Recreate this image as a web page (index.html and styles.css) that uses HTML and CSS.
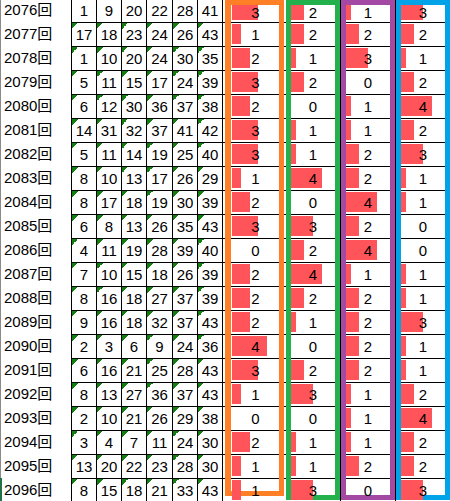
FILE: index.html
```html
<!DOCTYPE html>
<html lang="ja">

<head>
  <meta charset="UTF-8" />
  <title>ロト6 出現数</title>
  <link rel="stylesheet" href="styles.css">
</head>

<body>
  <div class="sheet">
    <!-- 回号 -->
    <div class="draws">
      <div class="draw">2076回</div>
      <div class="draw">2077回</div>
      <div class="draw">2078回</div>
      <div class="draw">2079回</div>
      <div class="draw">2080回</div>
      <div class="draw">2081回</div>
      <div class="draw">2082回</div>
      <div class="draw">2083回</div>
      <div class="draw">2084回</div>
      <div class="draw">2085回</div>
      <div class="draw">2086回</div>
      <div class="draw">2087回</div>
      <div class="draw">2088回</div>
      <div class="draw">2089回</div>
      <div class="draw">2090回</div>
      <div class="draw">2091回</div>
      <div class="draw">2092回</div>
      <div class="draw">2093回</div>
      <div class="draw">2094回</div>
      <div class="draw">2095回</div>
      <div class="draw draw-sel">2096回</div>
    </div>

    <!-- 当選番号 -->
    <div class="nums">
      <div class="num first">1</div><div class="num first">9</div><div class="num first">20</div><div class="num first">22</div><div class="num first">28</div><div class="num first">41</div>
      <div class="num">17</div><div class="num">18</div><div class="num">23</div><div class="num">24</div><div class="num">26</div><div class="num">43</div>
      <div class="num">1</div><div class="num">10</div><div class="num">20</div><div class="num">24</div><div class="num">30</div><div class="num">35</div>
      <div class="num">5</div><div class="num">11</div><div class="num">15</div><div class="num">17</div><div class="num">24</div><div class="num">39</div>
      <div class="num">6</div><div class="num">12</div><div class="num">30</div><div class="num">36</div><div class="num">37</div><div class="num">38</div>
      <div class="num">14</div><div class="num">31</div><div class="num">32</div><div class="num">37</div><div class="num">41</div><div class="num">42</div>
      <div class="num">5</div><div class="num">11</div><div class="num">14</div><div class="num">19</div><div class="num">25</div><div class="num">40</div>
      <div class="num">8</div><div class="num">10</div><div class="num">13</div><div class="num">17</div><div class="num">26</div><div class="num">29</div>
      <div class="num">8</div><div class="num">17</div><div class="num">18</div><div class="num">19</div><div class="num">30</div><div class="num">39</div>
      <div class="num">6</div><div class="num">8</div><div class="num">13</div><div class="num">26</div><div class="num">35</div><div class="num">43</div>
      <div class="num">4</div><div class="num">11</div><div class="num">19</div><div class="num">28</div><div class="num">39</div><div class="num">40</div>
      <div class="num">7</div><div class="num">10</div><div class="num">15</div><div class="num">18</div><div class="num">26</div><div class="num">39</div>
      <div class="num">8</div><div class="num">16</div><div class="num">18</div><div class="num">27</div><div class="num">37</div><div class="num">39</div>
      <div class="num">9</div><div class="num">16</div><div class="num">18</div><div class="num">32</div><div class="num">37</div><div class="num">43</div>
      <div class="num">2</div><div class="num">3</div><div class="num">6</div><div class="num">9</div><div class="num">24</div><div class="num">36</div>
      <div class="num">6</div><div class="num">16</div><div class="num">21</div><div class="num">25</div><div class="num">28</div><div class="num">43</div>
      <div class="num">8</div><div class="num">13</div><div class="num">27</div><div class="num">36</div><div class="num">37</div><div class="num">43</div>
      <div class="num">2</div><div class="num">10</div><div class="num">21</div><div class="num">26</div><div class="num">29</div><div class="num">38</div>
      <div class="num">3</div><div class="num">4</div><div class="num">7</div><div class="num">11</div><div class="num">24</div><div class="num">30</div>
      <div class="num">13</div><div class="num">20</div><div class="num">22</div><div class="num">23</div><div class="num">28</div><div class="num">30</div>
      <div class="num">8</div><div class="num">15</div><div class="num">18</div><div class="num">21</div><div class="num">33</div><div class="num">43</div>
    </div>

    <div class="ticks"></div>

    <!-- グループ1 -->
    <div class="box box-orange">
      <div class="cell"><span class="bar" style="width:26px"></span><span class="val">3</span></div>
      <div class="cell"><span class="bar" style="width:9px"></span><span class="val">1</span></div>
      <div class="cell"><span class="bar" style="width:18px"></span><span class="val">2</span></div>
      <div class="cell"><span class="bar" style="width:26px"></span><span class="val">3</span></div>
      <div class="cell"><span class="bar" style="width:18px"></span><span class="val">2</span></div>
      <div class="cell"><span class="bar" style="width:26px"></span><span class="val">3</span></div>
      <div class="cell"><span class="bar" style="width:26px"></span><span class="val">3</span></div>
      <div class="cell"><span class="bar" style="width:9px"></span><span class="val">1</span></div>
      <div class="cell"><span class="bar" style="width:18px"></span><span class="val">2</span></div>
      <div class="cell"><span class="bar" style="width:26px"></span><span class="val">3</span></div>
      <div class="cell"><span class="bar" style="width:0"></span><span class="val">0</span></div>
      <div class="cell"><span class="bar" style="width:18px"></span><span class="val">2</span></div>
      <div class="cell"><span class="bar" style="width:18px"></span><span class="val">2</span></div>
      <div class="cell"><span class="bar" style="width:18px"></span><span class="val">2</span></div>
      <div class="cell"><span class="bar" style="width:35px"></span><span class="val">4</span></div>
      <div class="cell"><span class="bar" style="width:26px"></span><span class="val">3</span></div>
      <div class="cell"><span class="bar" style="width:9px"></span><span class="val">1</span></div>
      <div class="cell"><span class="bar" style="width:0"></span><span class="val">0</span></div>
      <div class="cell"><span class="bar" style="width:18px"></span><span class="val">2</span></div>
      <div class="cell"><span class="bar" style="width:9px"></span><span class="val">1</span></div>
      <div class="cell"><span class="bar" style="width:9px"></span><span class="val">1</span></div>
    </div>

    <div class="sep"></div>

    <!-- グループ2 -->
    <div class="box box-green">
      <div class="cell"><span class="bar" style="width:13px"></span><span class="val">2</span></div>
      <div class="cell"><span class="bar" style="width:13px"></span><span class="val">2</span></div>
      <div class="cell"><span class="bar" style="width:5px"></span><span class="val">1</span></div>
      <div class="cell"><span class="bar" style="width:13px"></span><span class="val">2</span></div>
      <div class="cell"><span class="bar" style="width:0"></span><span class="val">0</span></div>
      <div class="cell"><span class="bar" style="width:5px"></span><span class="val">1</span></div>
      <div class="cell"><span class="bar" style="width:5px"></span><span class="val">1</span></div>
      <div class="cell"><span class="bar" style="width:31px"></span><span class="val">4</span></div>
      <div class="cell"><span class="bar" style="width:0"></span><span class="val">0</span></div>
      <div class="cell"><span class="bar" style="width:22px"></span><span class="val">3</span></div>
      <div class="cell"><span class="bar" style="width:13px"></span><span class="val">2</span></div>
      <div class="cell"><span class="bar" style="width:31px"></span><span class="val">4</span></div>
      <div class="cell"><span class="bar" style="width:13px"></span><span class="val">2</span></div>
      <div class="cell"><span class="bar" style="width:5px"></span><span class="val">1</span></div>
      <div class="cell"><span class="bar" style="width:0"></span><span class="val">0</span></div>
      <div class="cell"><span class="bar" style="width:13px"></span><span class="val">2</span></div>
      <div class="cell"><span class="bar" style="width:22px"></span><span class="val">3</span></div>
      <div class="cell"><span class="bar" style="width:0"></span><span class="val">0</span></div>
      <div class="cell"><span class="bar" style="width:5px"></span><span class="val">1</span></div>
      <div class="cell"><span class="bar" style="width:5px"></span><span class="val">1</span></div>
      <div class="cell"><span class="bar" style="width:22px"></span><span class="val">3</span></div>
    </div>

    <div class="line"></div>

    <!-- グループ3 -->
    <div class="box box-purple">
      <div class="cell"><span class="bar" style="width:5px"></span><span class="val">1</span></div>
      <div class="cell"><span class="bar" style="width:13px"></span><span class="val">2</span></div>
      <div class="cell"><span class="bar" style="width:22px"></span><span class="val">3</span></div>
      <div class="cell"><span class="bar" style="width:0"></span><span class="val">0</span></div>
      <div class="cell"><span class="bar" style="width:5px"></span><span class="val">1</span></div>
      <div class="cell"><span class="bar" style="width:5px"></span><span class="val">1</span></div>
      <div class="cell"><span class="bar" style="width:13px"></span><span class="val">2</span></div>
      <div class="cell"><span class="bar" style="width:13px"></span><span class="val">2</span></div>
      <div class="cell"><span class="bar" style="width:31px"></span><span class="val">4</span></div>
      <div class="cell"><span class="bar" style="width:13px"></span><span class="val">2</span></div>
      <div class="cell"><span class="bar" style="width:31px"></span><span class="val">4</span></div>
      <div class="cell"><span class="bar" style="width:5px"></span><span class="val">1</span></div>
      <div class="cell"><span class="bar" style="width:13px"></span><span class="val">2</span></div>
      <div class="cell"><span class="bar" style="width:13px"></span><span class="val">2</span></div>
      <div class="cell"><span class="bar" style="width:13px"></span><span class="val">2</span></div>
      <div class="cell"><span class="bar" style="width:13px"></span><span class="val">2</span></div>
      <div class="cell"><span class="bar" style="width:5px"></span><span class="val">1</span></div>
      <div class="cell"><span class="bar" style="width:5px"></span><span class="val">1</span></div>
      <div class="cell"><span class="bar" style="width:5px"></span><span class="val">1</span></div>
      <div class="cell"><span class="bar" style="width:13px"></span><span class="val">2</span></div>
      <div class="cell"><span class="bar" style="width:0"></span><span class="val">0</span></div>
    </div>

    <div class="line"></div>

    <!-- グループ4 -->
    <div class="box box-blue">
      <div class="cell"><span class="bar" style="width:22px"></span><span class="val">3</span></div>
      <div class="cell"><span class="bar" style="width:13px"></span><span class="val">2</span></div>
      <div class="cell"><span class="bar" style="width:5px"></span><span class="val">1</span></div>
      <div class="cell"><span class="bar" style="width:13px"></span><span class="val">2</span></div>
      <div class="cell"><span class="bar" style="width:31px"></span><span class="val">4</span></div>
      <div class="cell"><span class="bar" style="width:13px"></span><span class="val">2</span></div>
      <div class="cell"><span class="bar" style="width:22px"></span><span class="val">3</span></div>
      <div class="cell"><span class="bar" style="width:5px"></span><span class="val">1</span></div>
      <div class="cell"><span class="bar" style="width:5px"></span><span class="val">1</span></div>
      <div class="cell"><span class="bar" style="width:0"></span><span class="val">0</span></div>
      <div class="cell"><span class="bar" style="width:0"></span><span class="val">0</span></div>
      <div class="cell"><span class="bar" style="width:5px"></span><span class="val">1</span></div>
      <div class="cell"><span class="bar" style="width:5px"></span><span class="val">1</span></div>
      <div class="cell"><span class="bar" style="width:22px"></span><span class="val">3</span></div>
      <div class="cell"><span class="bar" style="width:5px"></span><span class="val">1</span></div>
      <div class="cell"><span class="bar" style="width:5px"></span><span class="val">1</span></div>
      <div class="cell"><span class="bar" style="width:13px"></span><span class="val">2</span></div>
      <div class="cell"><span class="bar" style="width:31px"></span><span class="val">4</span></div>
      <div class="cell"><span class="bar" style="width:13px"></span><span class="val">2</span></div>
      <div class="cell"><span class="bar" style="width:13px"></span><span class="val">2</span></div>
      <div class="cell"><span class="bar" style="width:22px"></span><span class="val">3</span></div>
    </div>
  </div>
</body>

</html>
```

FILE: styles.css
```css
:root {
  --grid: #000000;
  --bar: #ff555a;
  --check: #12800f;
  --orange: #ff7f27;
  --green: #22b14c;
  --purple: #a349a4;
  --blue: #00a2e8;
  --select: #217346;
}

* {
  box-sizing: border-box;
  margin: 0;
  padding: 0;
}

html,
body {
  width: 450px;
  height: 501px;
  overflow: hidden;
  background: #ffffff;
}

body {
  font-family: "Liberation Sans", "Noto Sans CJK JP", sans-serif;
  font-size: 15px;
  color: #000000;
}

.sheet {
  display: flex;
  align-items: flex-start;
  margin-top: -2px;
}

/* 回号 */
.draws {
  width: 71px;
  flex: none;
}

.draw {
  height: 24px;
  line-height: 24px;
  padding-left: 3px;
  border-left: 1px solid #8a8a8a;
  white-space: nowrap;
}

.draw-sel {
  border-left: 2px solid var(--select);
  padding-left: 2px;
}

/* 当選番号 */
.nums {
  flex: none;
  display: grid;
  grid-template-columns: 24px 24px 24px 25px 24px 24px;
  grid-auto-rows: 23px;
  gap: 1px;
  background: var(--grid);
  border: 1px solid var(--grid);
}

.num {
  display: flex;
  align-items: center;
  justify-content: center;
  background: linear-gradient(135deg, var(--check) 50%, transparent 50%) no-repeat 0 0 / 6px 6px,
    #ffffff;
}

.num.first {
  background: #ffffff;
}

.ticks,
.sep {
  flex: none;
  width: 2px;
  height: 503px;
  background: repeating-linear-gradient(to bottom, var(--grid) 0 1px, transparent 1px 24px);
}

.line {
  flex: none;
  width: 1px;
  height: 503px;
  background: var(--grid);
}

/* 枠 */
.box {
  flex: none;
  width: 54px;
  height: 500px;
  margin-top: 2px;
  border: 5px solid;
}

.box-orange {
  width: 59px;
  height: 496px;
  border-color: var(--orange);
  border-left-width: 6px;
}

.box-green {
  border-color: var(--green);
}

.box-purple {
  border-color: var(--purple);
}

.box-blue {
  border-color: var(--blue);
}

.cell {
  display: grid;
  height: 24px;
  padding: 1px 0 2px;
  border-bottom: 1px solid var(--grid);
}

.cell:first-child {
  height: 18px;
  padding-top: 0;
}

.box-orange .cell {
  padding-left: 1px;
}

.bar,
.val {
  grid-area: 1 / 1;
}

.bar {
  justify-self: start;
  height: 100%;
  background: var(--bar);
}

.val {
  justify-self: center;
  align-self: center;
  line-height: 1;
}
```
